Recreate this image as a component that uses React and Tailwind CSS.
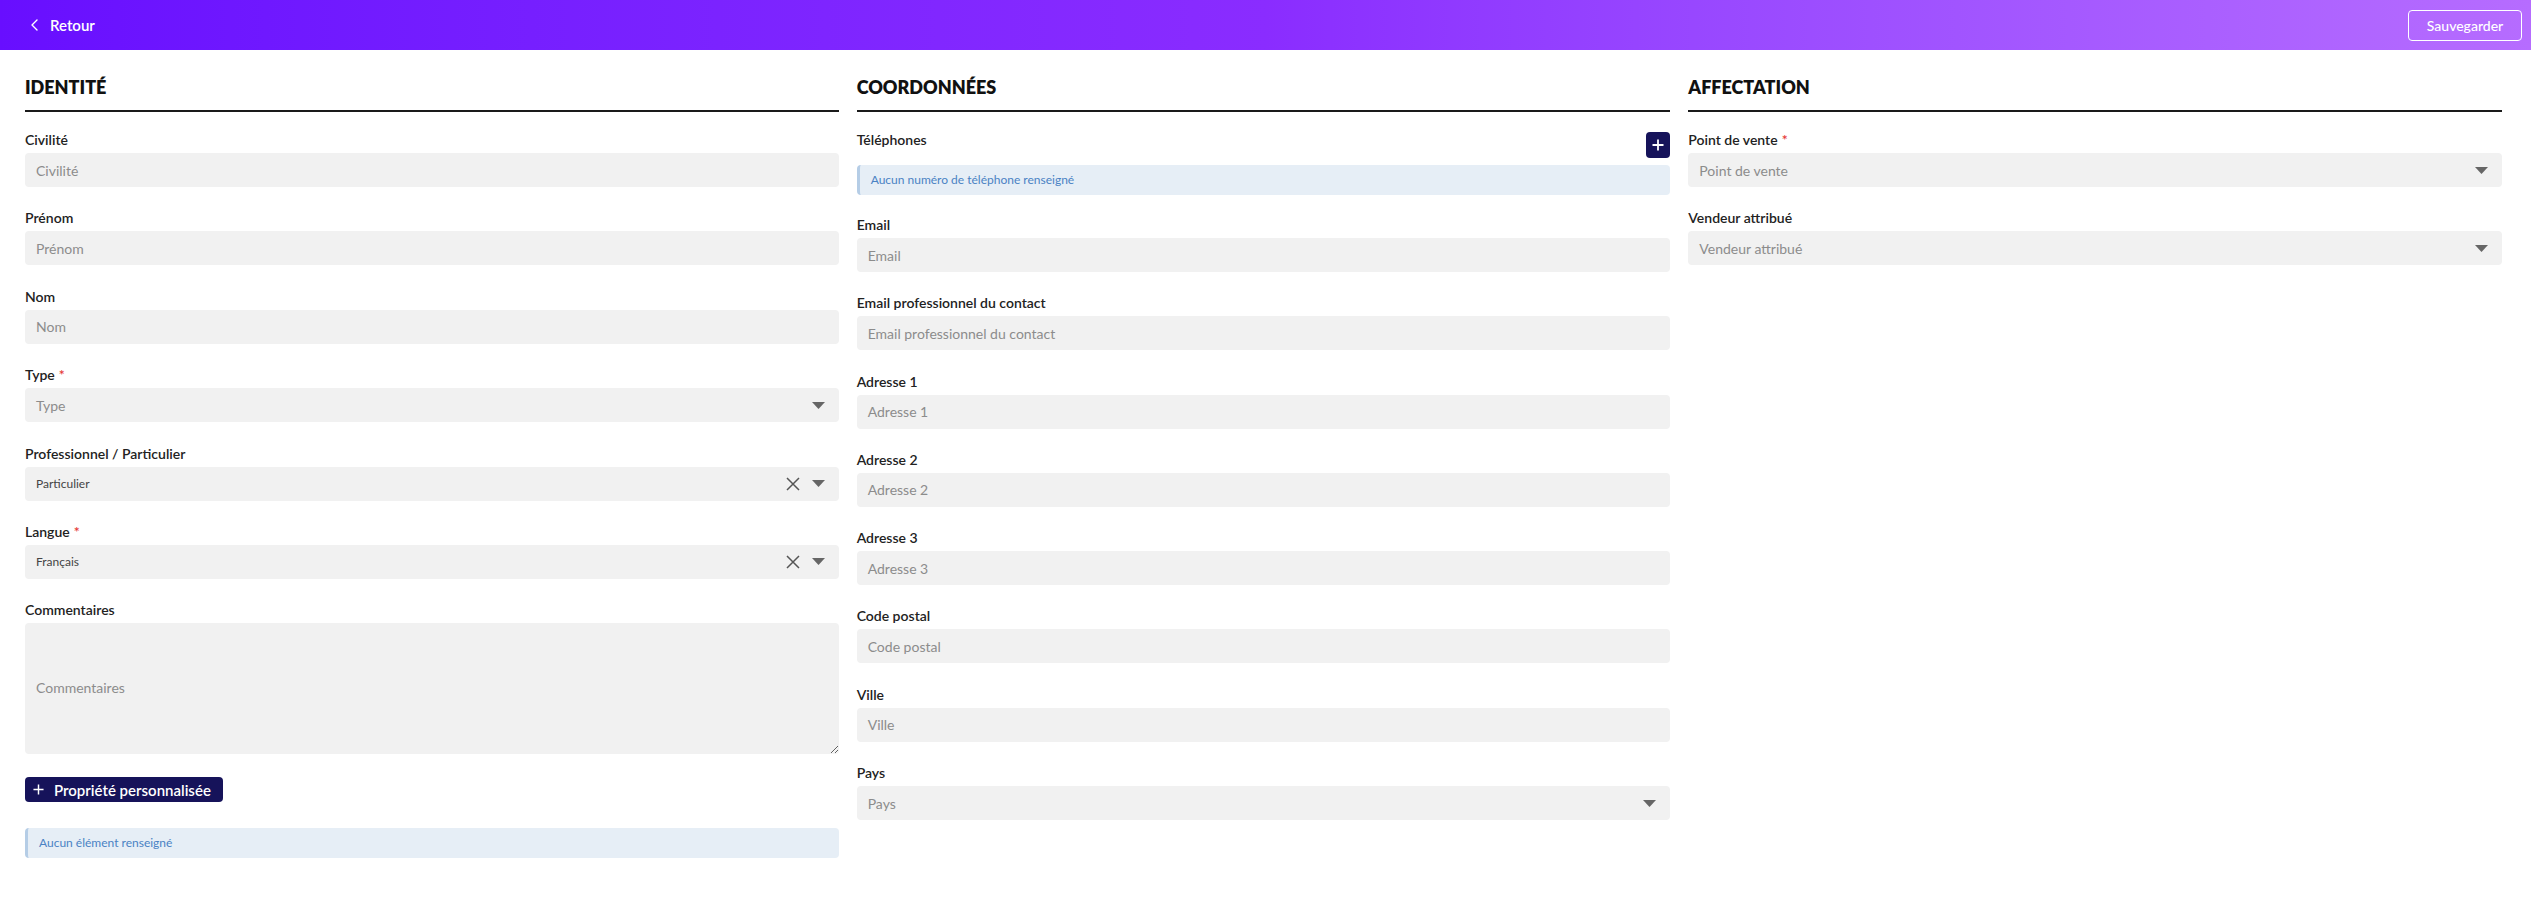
import React from "react";

const Chevron = () => (
  <svg width="12" height="14" viewBox="0 0 12 14" fill="none">
    <path d="M8 2L3 7l5 5" stroke="white" strokeWidth="1.4" strokeLinecap="round" strokeLinejoin="round" />
  </svg>
);

const Arrow = () => (
  <svg width="13" height="7" viewBox="0 0 13 7">
    <path d="M0 0h13L6.5 7z" fill="#666" />
  </svg>
);

const Cross = () => (
  <svg width="14" height="14" viewBox="0 0 14 14" fill="none">
    <path d="M1 1l12 12M13 1L1 13" stroke="#555" strokeWidth="1.5" />
  </svg>
);

const Plus = ({ size = 11, w = 1.6 }) => (
  <svg width={size} height={size} viewBox="0 0 12 12" fill="none">
    <path d="M6 0.5v11M0.5 6h11" stroke="white" strokeWidth={w} />
  </svg>
);

const Label = ({ children, required }) => (
  <div className="h-5 leading-5 text-[14px] font-semibold text-[#222] mb-[3px]">
    {children}
    {required && <span className="text-[#e53935] ml-1">*</span>}
  </div>
);

const Input = ({ label, required }) => (
  <div>
    <Label required={required}>{label}</Label>
    <div className="h-[34px] rounded bg-[#f1f1f1] flex items-center px-[11px] text-[14px] text-[#8c8c8c]">
      {label}
    </div>
  </div>
);

const Select = ({ label, required, value }) => (
  <div>
    <Label required={required}>{label}</Label>
    <div className="h-[34px] rounded bg-[#f1f1f1] flex items-center pl-[11px] pr-[14px]">
      {value ? (
        <span className="flex-1 text-[12px] text-[#444]">{value}</span>
      ) : (
        <span className="flex-1 text-[14px] text-[#8c8c8c]">{label}</span>
      )}
      {value && (
        <span className="mr-[12px] flex">
          <Cross />
        </span>
      )}
      <Arrow />
    </div>
  </div>
);

const Info = ({ children }) => (
  <div className="h-[30px] rounded bg-[#e6eef6] border-l-[3px] border-[#b5cde6] flex items-center pl-[11px] text-[12px] text-[#4a82c4]">
    {children}
  </div>
);

const Heading = ({ children }) => (
  <div className="h-6 leading-6 text-[18px] font-extrabold text-[#111] uppercase pb-[11px] border-b-2 border-[#1a1a1a] box-content mb-[18px]">
    {children}
  </div>
);

export default function App() {
  return (
    <div className="min-h-screen bg-white" style={{ fontFamily: "Lato, 'Noto Sans', sans-serif" }}>
      <header className="h-[50px] bg-gradient-to-r from-[#680eff] via-[#8a2cff] to-[#b66cff] flex items-center justify-between pl-[29px] pr-[9px]">
        <button className="flex items-center gap-[9px] text-white text-[15px] font-semibold">
          <Chevron />
          Retour
        </button>
        <button className="h-[31px] w-[114px] rounded border border-white text-white text-[14px] font-medium">
          Sauvegarder
        </button>
      </header>

      <main className="grid grid-cols-3 gap-x-[18px] pl-[25px] pr-[29px] pt-[25px]">
        {/* Identité */}
        <section>
          <Heading>Identité</Heading>
          <div className="flex flex-col gap-[21.4px]">
            <Input label="Civilité" />
            <Input label="Prénom" />
            <Input label="Nom" />
            <Select label="Type" required />
            <Select label="Professionnel / Particulier" value="Particulier" />
            <Select label="Langue" required value="Français" />
            <div>
              <Label>Commentaires</Label>
              <textarea
                placeholder="Commentaires"
                className="block w-full h-[131px] rounded bg-[#f1f1f1] px-[11px] pt-[55px] leading-5 text-[14px] placeholder:text-[#8c8c8c] resize-y outline-none"
              />
            </div>
          </div>
          <button className="mt-[23px] h-[25px] pl-[8px] pr-[12px] rounded bg-[#16135a] text-white text-[15px] font-semibold flex items-center gap-[10px]">
            <Plus />
            Propriété personnalisée
          </button>
          <div className="mt-[26px]">
            <Info>Aucun élément renseigné</Info>
          </div>
        </section>

        {/* Coordonnées */}
        <section>
          <Heading>Coordonnées</Heading>
          <div className="flex items-start justify-between">
            <div className="h-5 leading-5 text-[14px] font-semibold text-[#222]">Téléphones</div>
            <button className="mt-[2px] w-[24px] h-[26px] rounded bg-[#16135a] flex items-center justify-center">
              <Plus size={12} w={1.8} />
            </button>
          </div>
          <div className="mt-[7px]">
            <Info>Aucun numéro de téléphone renseigné</Info>
          </div>
          <div className="mt-[20px] flex flex-col gap-[21.3px]">
            <Input label="Email" />
            <Input label="Email professionnel du contact" />
            <Input label="Adresse 1" />
            <Input label="Adresse 2" />
            <Input label="Adresse 3" />
            <Input label="Code postal" />
            <Input label="Ville" />
            <Select label="Pays" />
          </div>
        </section>

        {/* Affectation */}
        <section>
          <Heading>Affectation</Heading>
          <div className="flex flex-col gap-[21.4px]">
            <Select label="Point de vente" required />
            <Select label="Vendeur attribué" />
          </div>
        </section>
      </main>
    </div>
  );
}
